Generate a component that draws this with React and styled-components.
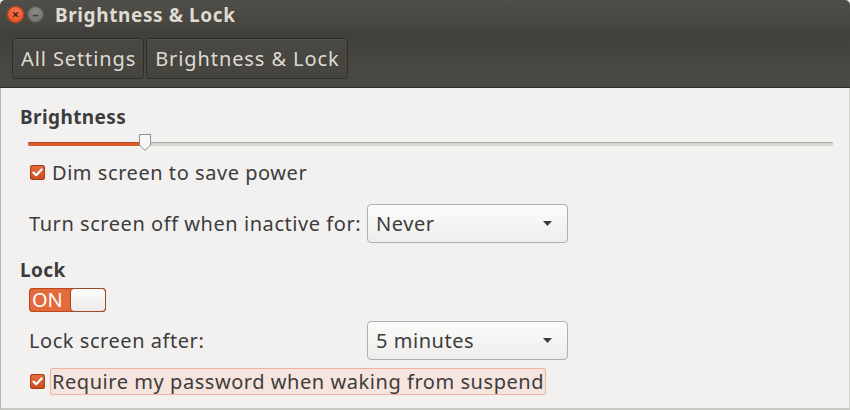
import React, { useState } from 'react';
import styled, { createGlobalStyle } from 'styled-components';

const Global = createGlobalStyle`
  html, body { margin: 0; padding: 0; }
  body {
    width: 850px;
    height: 410px;
    overflow: hidden;
    background: #f2f1f0;
    font-family: "Noto Sans", "DejaVu Sans", sans-serif;
  }
`

const Check = () => (
  <svg width="11" height="9" viewBox="0 0 11 9">
    <path d="M1.5 4.6 L4.2 7.2 L9.6 1.5" fill="none" stroke="#fff" strokeWidth="2.2" strokeLinecap="round" strokeLinejoin="round" />
  </svg>
)

const Caret = () => (
  <svg width="9" height="5" viewBox="0 0 9 5">
    <path d="M0 0 H9 L4.5 5 Z" fill="#3c3c3c" />
  </svg>
)

const Combo = ({ value }) => (
  <ComboBox>
    <span>{value}</span>
    <Caret />
  </ComboBox>
)

const App = () => {
  const [level] = useState(0.145)

  return (
    <Window>
      <Global />
      <TitleBar>
        <WinButton kind="close">×</WinButton>
        <WinButton kind="min">–</WinButton>
        <Title>Brightness &amp; Lock</Title>
      </TitleBar>
      <Toolbar>
        <Crumb>All Settings</Crumb>
        <Crumb>Brightness &amp; Lock</Crumb>
      </Toolbar>
      <Content>
        <Heading>Brightness</Heading>
        <Slider>
          <Track />
          <Fill style={{ width: `${level * 100}%` }} />
          <Knob style={{ left: `${level * 100}%` }}>
            <svg width="14" height="19" viewBox="0 0 14 19">
              <path d="M1.5 1.5 H12.5 V12 L7 17.5 L1.5 12 Z" fill="#f7f7f6" stroke="#8f8f8b" strokeWidth="1" strokeLinejoin="round" />
            </svg>
          </Knob>
        </Slider>
        <CheckRow top={3}>
          <Box><Check /></Box>
          <Label>Dim screen to save power</Label>
        </CheckRow>
        <FieldRow top={18}>
          <FieldLabel>Turn screen off when inactive for:</FieldLabel>
          <Combo value="Never" />
        </FieldRow>
        <Heading top={14}>Lock</Heading>
        <Switch>
          <SwitchText>ON</SwitchText>
          <SwitchThumb />
        </Switch>
        <FieldRow top={9}>
          <FieldLabel>Lock screen after:</FieldLabel>
          <Combo value="5 minutes" />
        </FieldRow>
        <CheckRow top={8}>
          <Box><Check /></Box>
          <Label focused>Require my password when waking from suspend</Label>
        </CheckRow>
      </Content>
    </Window>
  )
}
export default App

const Window = styled.div`
  width: 850px;
  height: 410px;
  display: flex;
  flex-flow: column nowrap;
  background: #f2f1f0;
`
const TitleBar = styled.div`
  height: 29px;
  flex: none;
  display: flex;
  align-items: center;
  background: linear-gradient(to bottom, #504e49, #45443f);
  border-radius: 5px 5px 0 0;
  padding-left: 7px;
  box-sizing: border-box;
`
const WinButton = styled.div`
  width: 17px;
  height: 17px;
  border-radius: 50%;
  margin-right: 3px;
  display: flex;
  align-items: center;
  justify-content: center;
  font-size: ${({kind}) => kind === 'close' ? '13px' : '12px'};
  line-height: 1;
  font-weight: bold;
  color: ${({kind}) => kind === 'close' ? '#5a1e10' : '#3b3a36'};
  background: ${({kind}) => kind === 'close'
    ? 'radial-gradient(circle at 50% 35%, #f4774c, #df4a1f)'
    : 'radial-gradient(circle at 50% 35%, #8a8983, #6c6b66)'};
  box-shadow: inset 0 0 0 1px ${({kind}) => kind === 'close' ? '#b53a17' : '#4f4e49'};
`
const Title = styled.span`
  margin-left: 8px;
  font-size: 19px;
  font-weight: bold;
  color: #dfdbd2;
  letter-spacing: 0.6px;
`
const Toolbar = styled.div`
  height: 59px;
  flex: none;
  display: flex;
  align-items: center;
  padding: 0 12px;
  gap: 2px;
  background: linear-gradient(to bottom, #403f3a, #4d4b46);
  border-bottom: 1px solid #2f2e2b;
  box-sizing: border-box;
`
const Crumb = styled.div`
  height: 41px;
  box-sizing: border-box;
  display: flex;
  align-items: center;
  padding: 0 7px 0 8px;
  font-size: 20px;
  letter-spacing: 0.9px;
  color: #dfdbd2;
  background: linear-gradient(to bottom, #4a4843, #45443f);
  border: 1px solid #2e2d2a;
  border-radius: 3px;
  box-shadow: inset 0 1px rgba(255,255,255,0.05);
`
const Content = styled.div`
  flex: 1;
  display: flex;
  flex-flow: column nowrap;
  align-items: flex-start;
  padding: 16px 16px 0 20px;
  border-left: 1px solid #b9b8b5;
  border-right: 1px solid #d3d2cf;
  border-bottom: 2px solid #c8c7c4;
  box-sizing: border-box;
  color: #3c3c3c;
`
const Heading = styled.div`
  font-size: 19px;
  font-weight: bold;
  letter-spacing: 0.4px;
  color: #3c3c3c;
  line-height: 26px;
  margin-top: ${({top}) => top || 0}px;
  margin-left: -1px;
`
const Slider = styled.div`
  position: relative;
  align-self: stretch;
  height: 22px;
  margin: 4px 0 0 7px;
`
const Track = styled.div`
  position: absolute;
  left: 0;
  right: 0;
  top: 8px;
  height: 4px;
  border-radius: 2px;
  background: #d9d8d5;
  box-shadow: inset 0 1px #a9a8a4;
`
const Fill = styled.div`
  position: absolute;
  left: 0;
  top: 8px;
  height: 4px;
  border-radius: 2px;
  background: #dd5a2c;
  box-shadow: inset 0 1px #b44620;
`
const Knob = styled.div`
  position: absolute;
  top: -1px;
  margin-left: -7px;
  width: 14px;
  height: 19px;
  display: flex;
`
const CheckRow = styled.div`
  display: flex;
  align-items: center;
  gap: 5px;
  margin: ${({top}) => top || 0}px 0 0 9px;
`
const Box = styled.div`
  width: 15px;
  height: 15px;
  border-radius: 3px;
  background: linear-gradient(to bottom, #e8703f, #c9491e);
  box-shadow: inset 0 0 0 1px #a83e19;
  display: flex;
  align-items: center;
  justify-content: center;
`
const Label = styled.span`
  font-size: 20px;
  letter-spacing: 0.55px;
  line-height: 27px;
  padding: 0 2px;
  color: #3c3c3c;
  border-radius: 3px;
  background: ${({focused}) => focused ? '#f6e4de' : 'transparent'};
  box-shadow: ${({focused}) => focused ? 'inset 0 0 0 1px #eeb4a0' : 'none'};
`
const FieldRow = styled.div`
  display: grid;
  grid-template-columns: 338px 201px;
  align-items: center;
  margin: ${({top}) => top || 0}px 0 0 8px;
`
const FieldLabel = styled.span`
  font-size: 20px;
  letter-spacing: 0.55px;
  color: #3c3c3c;
`
const ComboBox = styled.div`
  height: 39px;
  box-sizing: border-box;
  display: flex;
  align-items: center;
  justify-content: space-between;
  padding: 0 15px 0 8px;
  border: 1px solid #b0afab;
  border-radius: 4px;
  background: linear-gradient(to bottom, #fbfbfa, #eeedec);
  font-size: 20px;
  letter-spacing: 0.55px;
  color: #3c3c3c;
`
const Switch = styled.div`
  margin: 5px 0 0 8px;
  width: 77px;
  height: 24px;
  box-sizing: border-box;
  display: flex;
  align-items: center;
  justify-content: space-between;
  border-radius: 4px;
  background: #e46a3c;
  box-shadow: inset 0 0 0 1px #b9481f;
`
const SwitchText = styled.span`
  color: #fff;
  font-size: 20px;
  line-height: 1;
  padding-left: 3px;
`
const SwitchThumb = styled.div`
  width: 36px;
  height: 24px;
  box-sizing: border-box;
  border-radius: 4px;
  border: 1px solid #9a4a2d;
  background: linear-gradient(to bottom, #fdfdfc, #ebeae8);
`
